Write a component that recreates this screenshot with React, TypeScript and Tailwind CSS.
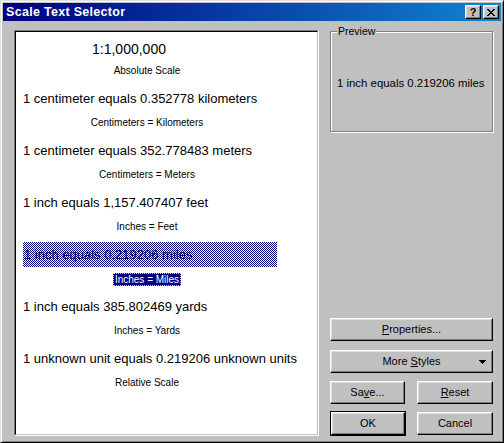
import React from "react";

const FONT = "font-['Liberation_Sans',Arial,sans-serif]";

const items = [
  { main: "1:1,000,000", sub: "Absolute Scale", big: true },
  { main: "1 centimeter equals 0.352778 kilometers", sub: "Centimeters = Kilometers" },
  { main: "1 centimeter equals 352.778483 meters", sub: "Centimeters = Meters" },
  { main: "1 inch equals 1,157.407407 feet", sub: "Inches = Feet" },
  { main: "1 inch equals 0.219206 miles", sub: "Inches = Miles", selected: true },
  { main: "1 inch equals 385.802469 yards", sub: "Inches = Yards" },
  { main: "1 unknown unit equals 0.219206 unknown units", sub: "Relative Scale" },
];

const bevel =
  "bg-[#c0c0c0] border border-t-white border-l-white border-r-black border-b-black shadow-[inset_-1px_-1px_0_#808080,inset_1px_1px_0_#dfdfdf]";

function Button({ children, className = "", isDefault = false }: { children: React.ReactNode; className?: string; isDefault?: boolean }) {
  return (
    <button
      className={`${bevel} relative h-[23px] flex items-center justify-center text-[11px] text-black ${
        isDefault ? "outline outline-1 outline-black" : ""
      } ${className}`}
    >
      {children}
    </button>
  );
}

function TitleButton({ children }: { children: React.ReactNode }) {
  return <div className={`${bevel} w-[16px] h-[14px] flex items-center justify-center`}>{children}</div>;
}

export default function App() {
  return (
    <div
      className={`${FONT} w-[504px] h-[443px] bg-[#c0c0c0] border border-t-[#dfdfdf] border-l-[#dfdfdf] border-r-black border-b-black shadow-[inset_1px_1px_0_#fff,inset_-1px_-1px_0_#808080] p-[2px] flex flex-col select-none`}
    >
      {/* title bar */}
      <div className="h-[18px] flex items-center justify-between pl-[3px] pr-[2px] bg-[linear-gradient(to_right,#000080,#1084d0)]">
        <span className="text-white font-bold text-[12.5px] tracking-[0.3px]">Scale Text Selector</span>
        <div className="flex gap-[2px]">
          <TitleButton>
            <span className="text-[11px] font-bold leading-none text-black">?</span>
          </TitleButton>
          <TitleButton>
            <svg width="8" height="7" viewBox="0 0 8 7" shapeRendering="crispEdges">
              <path d="M0 0h2v1h-2zM6 0h2v1h-2zM1 1h2v1h-2zM5 1h2v1h-2zM2 2h4v1h-4zM3 3h2v1h-2zM2 4h4v1h-4zM1 5h2v1h-2zM5 5h2v1h-2zM0 6h2v1h-2zM6 6h2v1h-2z" fill="#000" />
            </svg>
          </TitleButton>
        </div>
      </div>

      {/* body */}
      <div className="flex-1 flex pl-[11px] pt-[9px] pb-[4px]">
        {/* list */}
        <div className="w-[305px] border border-t-[#808080] border-l-[#808080] border-r-white border-b-white">
          <div className="h-full bg-white border border-t-black border-l-black border-r-[#c0c0c0] border-b-[#c0c0c0] pt-[7px] pl-[7px]">
            {items.map((it) => (
              <div key={it.sub} className="h-[52px] w-[254px]">
                <div className={`relative h-4 leading-4 text-[13px] text-black whitespace-nowrap ${it.big ? "pt-[2px]" : ""}`}>
                  {it.selected && (
                    <div className="absolute left-0 top-[-5px] h-[25px] w-[254px] bg-[repeating-conic-gradient(#000080_0%_25%,#ffffff_0%_50%)] bg-[length:2px_2px]" />
                  )}
                  <span className={`relative ${it.big ? "pl-[69px] text-[14px]" : it.selected ? "pl-[1px] text-[#000040]" : ""}`}>
                    {it.main}
                  </span>
                </div>
                <div className="mt-[10px] h-3 leading-3 text-[10px] text-center w-[248px] whitespace-nowrap">
                  {it.selected ? (
                    <span className="inline-block bg-[#000080] text-white px-[1px] border border-dotted border-[#d8d880] leading-[11px]">
                      {it.sub}
                    </span>
                  ) : (
                    <span className="text-black">{it.sub}</span>
                  )}
                </div>
              </div>
            ))}
          </div>
        </div>

        {/* right column */}
        <div className="ml-[11px] w-[163px] flex flex-col pb-[1px]">
          <div className="relative mt-[1px] h-[101px] w-[163px] border border-[#808080] shadow-[1px_1px_0_#fff,inset_1px_1px_0_#fff]">
            <span className="absolute left-[6px] top-[-7px] bg-[#c0c0c0] px-[1px] text-[10.5px] leading-3 text-black">
              Preview
            </span>
            <div className="pt-[44px] pl-[6px] text-[11.4px] leading-[14px] text-black whitespace-nowrap">
              1 inch equals 0.219206 miles
            </div>
          </div>

          <div className="mt-auto flex flex-col">
            <Button className="w-[163px]">
              <span><span className="underline">P</span>roperties...</span>
            </Button>
            <Button className="w-[163px] mt-[9px]">
              <span>More <span className="underline">S</span>tyles</span>
              <svg className="absolute right-[6px] top-[9px]" width="7" height="4" viewBox="0 0 7 4" shapeRendering="crispEdges">
                <path d="M0 0h7v1h-7zM1 1h5v1h-5zM2 2h3v1h-3zM3 3h1v1h-1z" fill="#000" />
              </svg>
            </Button>
            <div className="flex justify-between mt-[8px]">
              <Button className="w-[75px]">
                <span>Sa<span className="underline">v</span>e...</span>
              </Button>
              <Button className="w-[76px]">
                <span><span className="underline">R</span>eset</span>
              </Button>
            </div>
            <div className="flex justify-between mt-[8px]">
              <Button className="w-[74px] ml-[1px]" isDefault>
                OK
              </Button>
              <Button className="w-[76px]">Cancel</Button>
            </div>
          </div>
        </div>
      </div>
    </div>
  );
}
